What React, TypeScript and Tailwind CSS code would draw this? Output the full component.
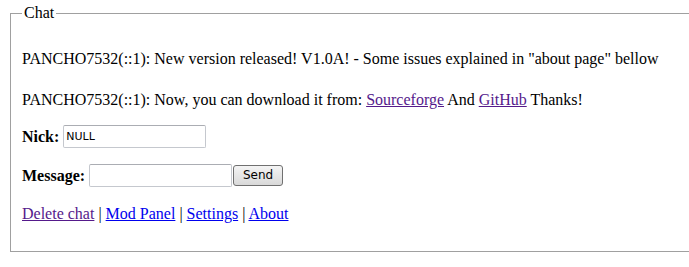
import React from 'react';

const App = () => {
  return (
    <div className="h-[267px] w-full overflow-hidden bg-white font-['Liberation_Serif',serif] text-[16px] leading-[18px] text-black">
      <fieldset className="ml-[10px] mt-[4px] w-[700px] border border-[#a0a0a0] pl-[11px] pb-[28px]">
        <legend className="px-[2px] leading-[18px]">Chat</legend>

        <div className="mt-[28px]">
          PANCHO7532(::1): New version released! V1.0A! - Some issues explained in "about page" bellow
        </div>
        <div className="mt-[23px]">
          PANCHO7532(::1): Now, you can download it from:{' '}
          <a href="#" className="text-[#551a8b] underline">
            Sourceforge
          </a>{' '}
          And{' '}
          <a href="#" className="text-[#551a8b] underline">
            GitHub
          </a>{' '}
          Thanks!
        </div>

        <div className="mt-[16px] flex h-[23px] items-center">
          <b className="font-bold">Nick:</b>
          <input
            type="text"
            defaultValue="NULL"
            className="ml-[4px] h-[23px] w-[143px] rounded-[2px] border border-[#c5c8ce] border-t-[#abadb3] bg-white px-[2px] font-['DejaVu_Sans',sans-serif] text-[11px] text-black outline-none"
          />
        </div>

        <div className="mt-[16px] flex h-[23px] items-center">
          <b className="font-bold">Message:</b>
          <input
            type="text"
            className="ml-[4px] h-[23px] w-[143px] rounded-[2px] border border-[#c5c8ce] border-t-[#abadb3] bg-white px-[2px] font-['DejaVu_Sans',sans-serif] text-[11px] outline-none"
          />
          <button className="ml-[1px] h-[21px] w-[50px] rounded-[3px] border border-[#707070] bg-gradient-to-b from-[#f4f4f4] to-[#d9d9d9] font-['DejaVu_Sans',sans-serif] text-[12px] leading-[19px] text-black">
            Send
          </button>
        </div>

        <div className="mt-[18px]">
          <a href="#" className="text-[#551a8b] underline">
            Delete chat
          </a>{' '}
          |{' '}
          <a href="#" className="text-[#0000ee] underline">
            Mod Panel
          </a>{' '}
          |{' '}
          <a href="#" className="text-[#0000ee] underline">
            Settings
          </a>{' '}
          |{' '}
          <a href="#" className="text-[#0000ee] underline">
            About
          </a>
        </div>
      </fieldset>
    </div>
  );
};

export default App;
